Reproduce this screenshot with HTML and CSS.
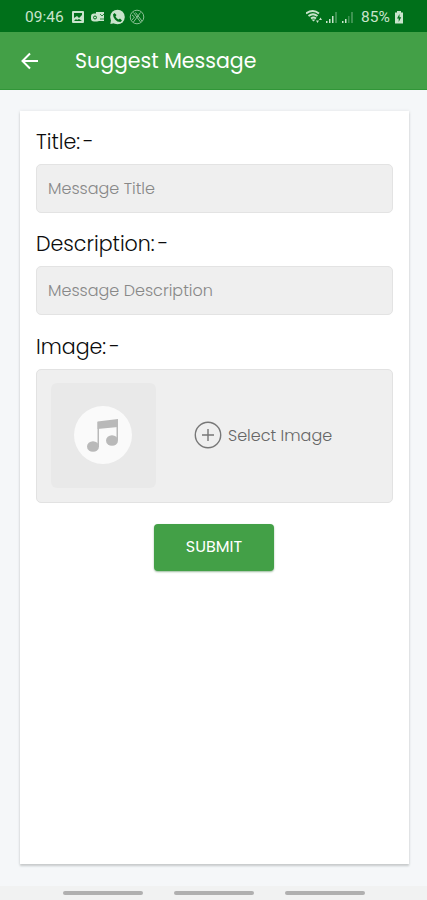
FILE: index.html
```html
<!DOCTYPE html>
<html lang="en">
<head>
<meta charset="utf-8">
<title>Suggest Message</title>
<link rel="stylesheet" href="styles.css">
</head>
<body>
<div class="screen">
  <div class="status">
    <span class="time">09:46</span>
    <svg class="notices" width="74" height="16" viewBox="0 0 74 16">
      <path fill="currentColor" fill-rule="evenodd" d="M2 2h10q1 0 1 1v10q0 1-1 1H2q-1 0-1-1V3q0-1 1-1zM3 4v5l3-2 2 2 3-3v-2zM3 12h8l-3-2-2 1-1-1z"/>
      <path fill="currentColor" d="M25 3h8v9h-8z"/>
      <rect x="20" y="4.500" width="9" height="8" rx="3" fill="currentColor"/>
      <circle cx="24" cy="8.5" r="1.5" fill="none" stroke="#00701a"/>
      <path d="M29 5l2 2 2-2M29 10h4" fill="none" stroke="#00701a" stroke-width=".8"/>
      <circle cx="46.500" cy="8" r="7.3" fill="currentColor"/>
      <path d="M39.300 15l1-5 4 4z" fill="currentColor"/>
      <path d="M43.500 4l2 2-1 1.5q1 2 3 3l1.500-1 2 2-1.500 1.500q-3.500 0-5.500-2.500t-2-5z" fill="#00701a"/>
      <g fill="none" stroke="currentColor" opacity=".7"><circle cx="66" cy="8" r="6.800"/><path d="M62.500 3.500l7 9.500M69.500 3.500l-7 9.500M64.500 3.500l6.500 8.500M61 6l2.500 2-2.500 3"/></g>
    </svg>
    <svg class="signals" width="50" height="16" viewBox="0 0 50 16">
      <g fill="none" stroke="currentColor" stroke-width="1.900"><path d="M0 4.500q7-5 13 0M2.500 7q4.500-3.500 9 0M5 9.500q2.500-2 5 0"/></g>
      <path d="M5.500 10.500h4l-2 2zM10 11.500l1.500 2.500 1.500-2.500zM13 11l1.500-2.500L16 11z" fill="currentColor"/>
      <g fill="currentColor"><path d="M20 12h1.500v2H20zM23 10h1.500v4H23zM26 7h1.500v7H26zM36 12h1.500v2H36zM39 10h1.500v4H39z"/><path opacity=".3" d="M29 3h2v11h-2zM42 7h1.500v7H42zM45 3h2v11h-2z"/></g>
    </svg>
    <span class="percent">85%</span>
    <svg class="battery" width="10" height="14" viewBox="0 0 10 14"><path fill="currentColor" d="M3 1h4v1.500h2v11H1v-11h2z"/><path fill="#00701a" d="M5.500 4L3 8.500h1.700V12L7.200 7.300H5.500z"/></svg>
  </div>
  <header class="bar">
    <svg class="back" width="18" height="18" viewBox="0 0 18 18"><path d="M17 9H2M9 1.500L1.500 9 9 16.500" fill="none" stroke="#fff" stroke-width="2"/></svg>
    <h1 class="heading">Suggest Message</h1>
  </header>
  <main class="card">
    <label class="label">Title:<span class="dash">-</span></label>
    <div class="field">Message Title</div>
    <label class="label">Description:<span class="dash">-</span></label>
    <div class="field">Message Description</div>
    <label class="label">Image:<span class="dash">-</span></label>
    <div class="picker">
      <div class="thumb">
        <svg width="60" height="60" viewBox="0 0 60 60"><circle cx="29" cy="30" r="29" fill="#fafafa"/><g fill="#b9b9b9"><path d="M23.500 16.500L44 14v8L23.500 24z"/><path d="M23.500 17H25v25h-1.500zM42.500 15H44v20h-1.500z"/><ellipse cx="19" cy="41.500" rx="6" ry="5.300"/><ellipse cx="38" cy="35.500" rx="6" ry="5.300"/></g></svg>
      </div>
      <div class="select">
        <svg width="28" height="28" viewBox="0 0 28 28" fill="none" stroke="#777" stroke-width="1.400"><circle cx="14" cy="14" r="12.700"/><path d="M14 8v12M8 14h12"/></svg>
        <span>Select Image</span>
      </div>
    </div>
    <button class="submit">SUBMIT</button>
  </main>
  <nav class="nav"><i></i><i></i><i></i></nav>
</div>
</body>
</html>
```
FILE: styles.css
```css
* { box-sizing: border-box; }
body { margin: 0; font-family: Poppins, Inter, sans-serif; }
.screen { width: 427px; height: 900px; background: #f5f7f9; display: flex; flex-direction: column; overflow: hidden; }
.status { height: 32px; flex: none; background: #00701a; color: #c9e4cc; display: flex; align-items: center; padding: 2px 23px 0 25px; font-family: Roboto, sans-serif; font-size: 15.5px; }
.time { width: 46px; }
.signals { margin-left: auto; margin-right: 6px; }
.percent { width: 33px; font-size: 15.5px; margin-left: -1px; }
.battery { flex: none; }
.bar { height: 58px; flex: none; background: #43a047; border-bottom: 1px solid #319638; display: flex; align-items: center; padding-left: 21px; color: #fff; }
.heading { margin: 0 0 0 36px; font-size: 20.5px; font-weight: 400; line-height: 30px; white-space: nowrap; }
.card { width: 389px; height: 753px; flex: none; margin: 21px 0 0 20px; padding: 15px 16px 0; background: #fff; box-shadow: 0 2px 2px #c8cbcc, 0 0 3px #dfe2e4; }
.label { display: block; height: 32px; line-height: 31px; margin-bottom: 6px; color: #0c0c0c; font-size: 20.6px; font-weight: 300; white-space: nowrap; }
.dash { margin-left: 3px; }
.field { width: 357px; height: 49px; border: 1px solid #e3e3e3; border-radius: 5px; background: #efefef; color: #888; display: flex; align-items: center; padding: 0 0 1px 11px; font-size: 16px; font-weight: 300; margin-bottom: 15.4px; white-space: nowrap; }
.picker { width: 357px; height: 134px; border: 1px solid #e2e2e2; border-radius: 5px; background: #efefef; display: flex; align-items: center; padding: 0 0 1px 14px; }
.thumb { width: 105px; height: 105px; border-radius: 6px; background: #e9e9e9; display: flex; align-items: center; justify-content: center; }
.thumb svg { filter: blur(.4px); }
.select { display: flex; align-items: center; gap: 6px; margin-left: 38px; color: #666; font-size: 16px; font-weight: 300; white-space: nowrap; }
.submit { display: block; width: 120px; height: 47px; margin: 21px 0 0 118px; border: 0; border-radius: 4px; background: #43a047; box-shadow: 0 1px 2px #9aba9c; color: #fff; font: 16px Poppins, Inter, sans-serif; padding: 0 0 2px; }
.nav { height: 14px; margin-top: auto; background: #f1f2f2; display: flex; justify-content: center; gap: 31px; padding-top: 5px; }
.nav i { width: 80px; height: 4px; border-radius: 2px; background: #b0b0b0; }
```
